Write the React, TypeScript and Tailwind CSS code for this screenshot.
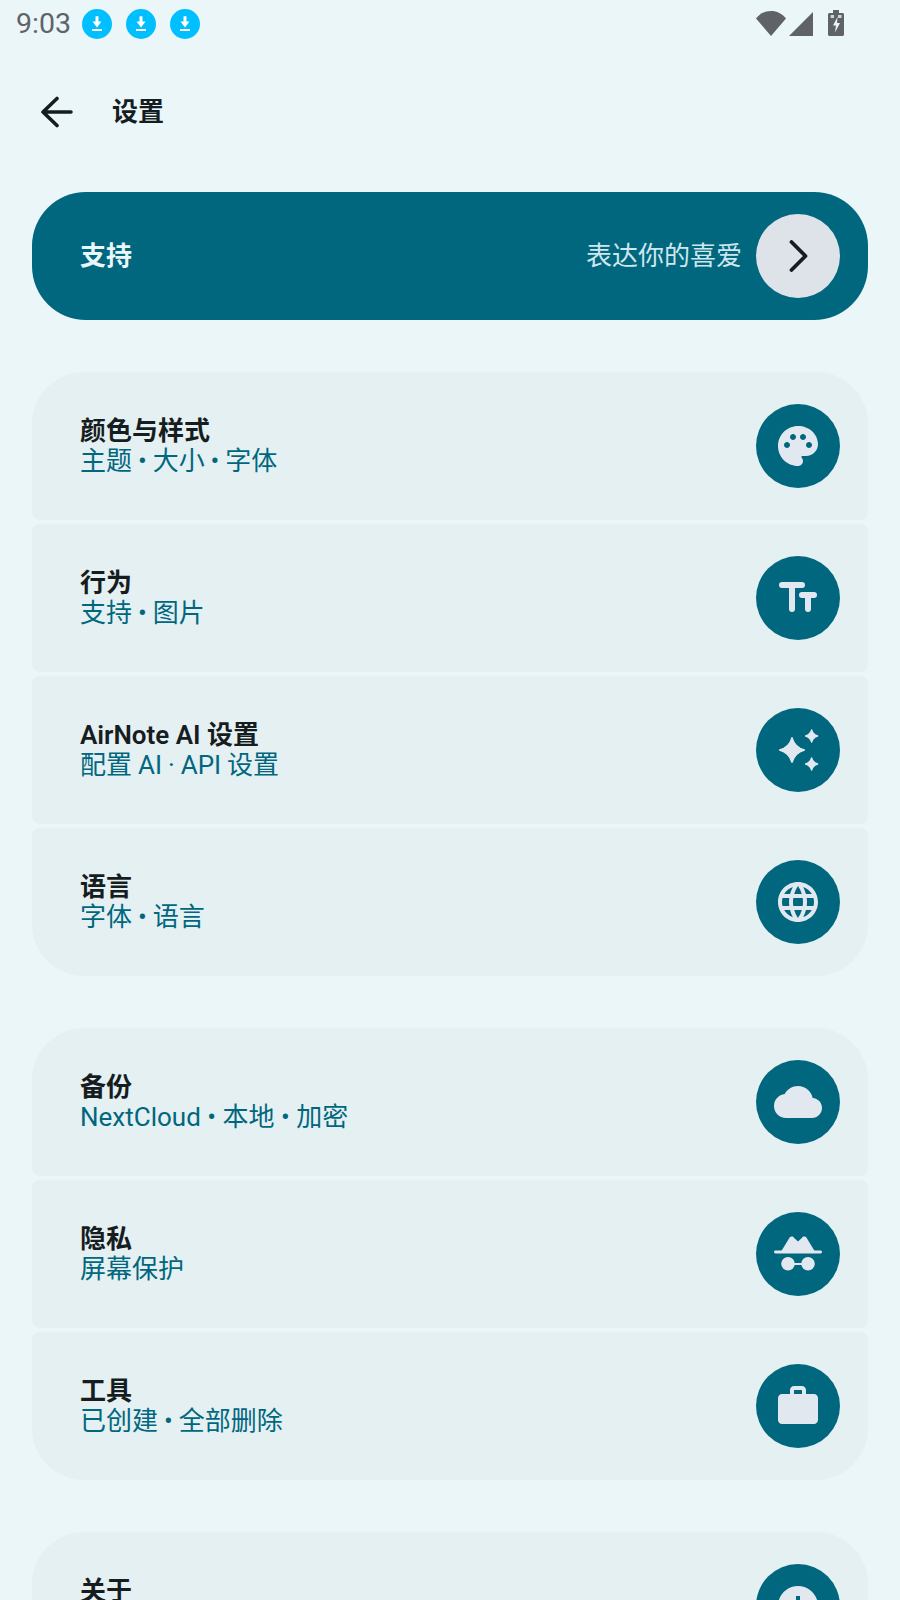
import type { ReactNode } from 'react';

const fontStack = 'font-[Roboto,"Noto_Sans_CJK_SC",sans-serif]';

function Glyph({ children }: { children: ReactNode }) {
  return (
    <svg viewBox="0 0 24 24" className="w-12 h-12 fill-[#e2e8ef] stroke-[#e2e8ef]" strokeWidth={0}>
      {children}
    </svg>
  );
}

function star(x: number, y: number, r: number) {
  const k = r * 0.22;
  return `M${x} ${y - r}Q${x + k} ${y - k} ${x + r} ${y}Q${x + k} ${y + k} ${x} ${y + r}Q${x - k} ${y + k} ${x - r} ${y}Q${x - k} ${y - k} ${x} ${y - r}Z`;
}

const icons: Record<string, ReactNode> = {
  palette: (
    <path
      fillRule="evenodd"
      d="M12 2C6.49 2 2 6.49 2 12s4.49 10 10 10c1.38 0 2.5-1.12 2.5-2.5 0-.61-.23-1.2-.64-1.67-.08-.1-.13-.21-.13-.33 0-.28.22-.5.5-.5H16c3.31 0 6-2.69 6-6 0-4.96-4.49-9-10-9zm5.5 11c-.83 0-1.5-.67-1.5-1.5s.67-1.5 1.5-1.5 1.5.67 1.5 1.5-.67 1.5-1.5 1.5zm-3-4c-.83 0-1.5-.67-1.5-1.5S13.67 6 14.5 6s1.5.67 1.5 1.5S15.33 9 14.5 9zM5 11.5c0-.83.67-1.5 1.5-1.5s1.5.67 1.5 1.5S7.33 13 6.5 13 5 12.33 5 11.5zm6-4c0 .83-.67 1.5-1.5 1.5S8 8.33 8 7.5 8.67 6 9.5 6s1.5.67 1.5 1.5z"
    />
  ),
  text: (
    <g fill="none" strokeWidth={3} strokeLinecap="round">
      <path d="M4 5.5h10M9 5.5v12" />
      <path d="M14 10.5h6M17 10.5v7" />
    </g>
  ),
  sparkle: (
    <g strokeWidth={0.7} strokeLinejoin="round">
      <path d={star(9, 12, 6.2)} />
      <path d={star(18.8, 5, 3)} />
      <path d={star(18.8, 19, 3)} />
    </g>
  ),
  globe: (
    <path d="M11.99 2C6.47 2 2 6.48 2 12s4.47 10 9.99 10C17.52 22 22 17.52 22 12S17.52 2 11.99 2zm6.93 6h-2.95c-.32-1.25-.78-2.45-1.38-3.56 1.84.63 3.37 1.91 4.33 3.56zM12 4.04c.83 1.2 1.48 2.53 1.91 3.96h-3.82c.43-1.43 1.08-2.76 1.91-3.96zM4.26 14C4.1 13.36 4 12.69 4 12s.1-1.36.26-2h3.38c-.08.66-.14 1.32-.14 2 0 .68.06 1.34.14 2H4.26zm.82 2h2.95c.32 1.25.78 2.45 1.38 3.56-1.84-.63-3.37-1.9-4.33-3.56zm2.95-8H5.08c.96-1.66 2.49-2.93 4.33-3.56C8.81 5.55 8.35 6.75 8.03 8zM12 19.96c-.83-1.2-1.48-2.53-1.91-3.96h3.82c-.43 1.43-1.08 2.76-1.91 3.96zM14.34 14H9.66c-.09-.66-.16-1.32-.16-2 0-.68.07-1.35.16-2h4.68c.09.65.16 1.32.16 2 0 .68-.07 1.34-.16 2zm.25 5.56c.6-1.11 1.06-2.31 1.38-3.56h2.95c-.96 1.65-2.49 2.93-4.33 3.56zM16.36 14c.08-.66.14-1.32.14-2 0-.68-.06-1.34-.14-2h3.38c.16.64.26 1.31.26 2s-.1 1.36-.26 2h-3.38z" />
  ),
  cloud: (
    <path d="M19.35 10.04C18.67 6.59 15.64 4 12 4 9.11 4 6.6 5.64 5.35 8.04 2.34 8.36 0 10.91 0 14c0 3.31 2.69 6 6 6h13c2.76 0 5-2.24 5-5 0-2.64-2.05-4.78-4.65-4.96z" />
  ),
  incognito: (
    <>
      <path d="M3.4 11L7.5 4.200C8.200 3 9.400 3 10.100 4L12 5.700 13.900 4C14.600 3 15.800 3 16.500 4.200L20.600 11Z" />
      <rect x="0" y="10.300" width="24" height="1.400" rx="0.700" />
      <circle cx="7" cy="16.900" r="3.400" />
      <circle cx="17" cy="16.900" r="3.400" />
      <rect x="9" y="16.500" width="6" height="1" />
    </>
  ),
  work: (
    <path
      fillRule="evenodd"
      d="M20 6h-4V4c0-1.11-.89-2-2-2h-4c-1.11 0-2 .89-2 2v2H4c-1.11 0-1.99.89-1.99 2L2 19c0 1.11.89 2 2 2h16c1.11 0 2-.89 2-2V8c0-1.11-.89-2-2-2zm-6 0h-4V4h4v2z"
    />
  ),
  info: (
    <path
      fillRule="evenodd"
      d="M12 2C6.48 2 2 6.48 2 12s4.48 10 10 10 10-4.48 10-10S17.52 2 12 2zm1 15h-2v-6h2v6zm0-8h-2V7h2v2z"
    />
  ),
};

function DownloadBadge() {
  return (
    <div className="w-[30px] h-[30px] rounded-full bg-[#00bfff] flex items-center justify-center">
      <svg viewBox="0 0 16 16" className="w-4 h-4" fill="#fff">
        <path d="M6.5 .3h3v5.200h3L8 11.500 3.500 5.500h3z" />
        <rect x="3" y="13" width="10" height="2" />
      </svg>
    </div>
  );
}

function StatusBar() {
  return (
    <div className="h-[48px] flex items-center pl-4 pr-[56px] text-[#5f6368]">
      <span className="text-[28.5px] font-[450] leading-none w-[66px]">9:03</span>
      <div className="flex gap-[14px]">
        <DownloadBadge />
        <DownloadBadge />
        <DownloadBadge />
      </div>
      <div className="ml-auto flex items-center">
        <svg width="88" height="28" viewBox="0 0 88 28" fill="#5f6368">
          <path d="M0 8.500C4 3.500 9 1 15 1s11 2.500 15 7.500L15 26z" />
          <path d="M33 26L57 2v24z" />
          <path d="M77 0h6v3h3.500c.8 0 1.500.7 1.500 1.500V24.500c0 .8-.7 1.500-1.500 1.500h-13c-.8 0-1.500-.7-1.500-1.500V4.500c0-.8.7-1.500 1.500-1.500H77z" />
          <rect x="74.700" y="5" width="3.300" height="3" fill="#ccd5d9" />
          <rect x="82" y="5" width="3.500" height="3" fill="#ccd5d9" />
          <path d="M81.500 7L77 15.500h3L79 22.500 84 13h-3z" fill="#ebf6f9" />
        </svg>
      </div>
    </div>
  );
}

function Row({ title, sub, icon, shape, subClass = '[word-spacing:-0.5px]' }: { title: string; sub: string; icon: string; shape: string; subClass?: string }) {
  return (
    <div className={`h-[148px] bg-[#e5f0f3] flex items-center justify-between pl-12 pr-7 ${shape}`}>
      <div className="flex flex-col">
        <span className="text-[26px] leading-[30px] font-semibold text-[#161d20]">{title}</span>
        <span className={`text-[26px] leading-[30px] text-[#01677e] ${subClass}`}>{sub}</span>
      </div>
      <div className="w-[84px] h-[84px] rounded-full bg-[#01677e] flex items-center justify-center">
        <Glyph>{icons[icon]}</Glyph>
      </div>
    </div>
  );
}

const TOP = 'rounded-t-[52px] rounded-b-lg';
const MID = 'rounded-lg';
const BOTTOM = 'rounded-t-lg rounded-b-[52px]';

export default function App() {
  return (
    <div className={`w-[900px] h-[1600px] overflow-hidden bg-[#ebf6f9] ${fontStack}`}>
      <StatusBar />
      <div className="h-[64px] mt-[32px] flex items-center pl-[41px] gap-[39px]">
        <svg viewBox="0 0 32 32" className="w-8 h-8" fill="none" stroke="#161d20" strokeWidth={3.6} strokeLinecap="round" strokeLinejoin="round">
          <path d="M30 16H2M16 2.500L2 16l14 13.500" />
        </svg>
        <span className="text-[26px] font-semibold text-[#161d20]">设置</span>
      </div>

      <div className="mt-[48px] mx-8 h-[128px] bg-[#01677e] rounded-[54px] flex items-center pl-12 pr-7">
        <span className="text-[26px] font-semibold text-[#ebf6f9]">支持</span>
        <span className="ml-auto mr-[14px] text-[26px] text-[#cfe6ec]">表达你的喜爱</span>
        <div className="w-[84px] h-[84px] rounded-full bg-[#dee3ea] flex items-center justify-center">
          <svg viewBox="0 0 24 32" className="w-6 h-8" fill="none" stroke="#161d20" strokeWidth={3.800} strokeLinecap="round" strokeLinejoin="round">
            <path d="M5.500 2l14 14-14 14" />
          </svg>
        </div>
      </div>

      <div className="mt-[52px] mx-8 flex flex-col gap-1">
        <Row title="颜色与样式" sub="主题 • 大小 • 字体" icon="palette" shape={TOP} />
        <Row title="行为" sub="支持 • 图片" icon="text" shape={MID} />
        <Row title="AirNote AI 设置" sub="配置 AI · API 设置" icon="sparkle" shape={MID} />
        <Row title="语言" sub="字体 • 语言" icon="globe" shape={BOTTOM} />
      </div>

      <div className="mt-[52px] mx-8 flex flex-col gap-1">
        <Row title="备份" sub="NextCloud • 本地 • 加密" icon="cloud" shape={TOP} subClass="" />
        <Row title="隐私" sub="屏幕保护" icon="incognito" shape={MID} />
        <Row title="工具" sub="已创建 • 全部删除" icon="work" shape={BOTTOM} />
      </div>

      <div className="mt-[52px] mx-8 flex flex-col gap-1">
        <Row title="关于" sub={'\u00a0'} icon="info" shape={TOP} />
      </div>
    </div>
  );
}
